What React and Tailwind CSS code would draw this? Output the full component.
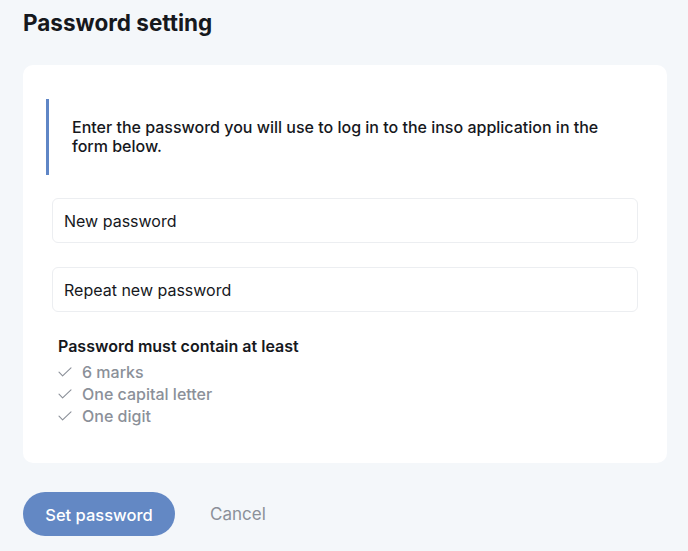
import { useState } from "react";

function Check() {
  return (
    <svg width="14" height="10" viewBox="0 0 14 10" fill="none" className="shrink-0">
      <path d="M1 5.2 L4.6 8.8 L13 0.8" stroke="#8b9099" strokeWidth="1.1" strokeLinecap="round" strokeLinejoin="round" />
    </svg>
  );
}

export default function App() {
  const [password, setPassword] = useState("");
  const [repeat, setRepeat] = useState("");

  const rules = ["6 marks", "One capital letter", "One digit"];

  return (
    <div className="min-h-[551px] bg-[#f4f7fa] pl-[23px] pr-[21px] pt-[9px] pb-[15px] font-['Inter',sans-serif] text-[#16181d]">
      <h1 className="text-[22.5px] leading-[27px] font-bold">Password setting</h1>

      <div className="mt-[29px] rounded-[10px] bg-white pl-[29px] pr-[29px] pt-[34px] pb-[36px]">
        {/* info */}
        <div className="-ml-[6px] border-l-[3px] border-[#5f86c6] py-[19px] pl-[23px]">
          <p className="max-w-[540px] text-[16px] leading-[19px] font-[450]">
            Enter the password you will use to log in to the inso application in the form below.
          </p>
        </div>

        <div className="mt-[23px] flex flex-col gap-[24px]">
          <input
            type="password"
            value={password}
            onChange={(e) => setPassword(e.target.value)}
            placeholder="New password"
            className="h-[45px] w-full rounded-[6px] border border-[#eceef1] px-[11px] text-[16px] placeholder-[#16181d] focus:outline-none"
          />
          <input
            type="password"
            value={repeat}
            onChange={(e) => setRepeat(e.target.value)}
            placeholder="Repeat new password"
            className="h-[45px] w-full rounded-[6px] border border-[#eceef1] px-[11px] text-[16px] placeholder-[#16181d] focus:outline-none"
          />
        </div>

        <div className="mt-[23px] pl-[6px]">
          <p className="text-[16px] leading-[22px] font-semibold">Password must contain at least</p>
          <ul className="mt-[4px]">
            {rules.map((r) => (
              <li key={r} className="flex items-center gap-[10px] text-[16px] leading-[22px] font-medium text-[#8b9099]">
                <Check />
                {r}
              </li>
            ))}
          </ul>
        </div>
      </div>

      <div className="mt-[29px] flex items-center gap-[35px]">
        <button className="h-[44px] w-[152px] rounded-full bg-[#6388c4] pt-[2px] text-[16.5px] font-medium text-white">
          Set password
        </button>
        <button className="pt-[2px] text-[17px] text-[#8b9099]">Cancel</button>
      </div>
    </div>
  );
}
